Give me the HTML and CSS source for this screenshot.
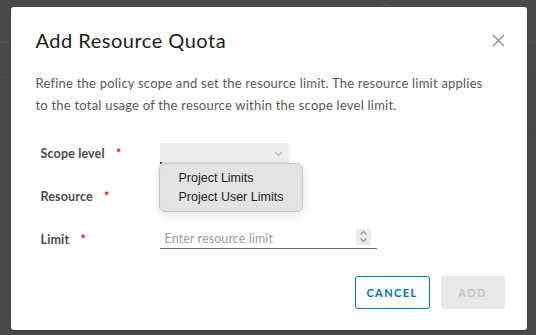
FILE: index.html
```html
<!DOCTYPE html>
<html>
<head>
<meta charset="utf-8">
<link rel="stylesheet" href="styles.css">
</head>
<body>
<div class="page">
  <div class="page-top"><span class="avatar"></span></div>
  <div class="page-band"></div>
  <div class="page-row"></div>
</div>
<div class="overlay">
  <div class="modal">
    <div class="modal-header">
      <h3 class="modal-title">Add Resource Quota</h3>
      <button class="close" aria-label="Close">
        <svg width="13" height="13" viewBox="0 0 13 13"><path d="M1 1L12 12M12 1L1 12" stroke="#8a8a8a" stroke-width="1.3" fill="none"/></svg>
      </button>
    </div>
    <p class="desc">Refine the policy scope and set the resource limit. The resource limit applies to the total usage of the resource within the scope level limit.</p>
    <div class="form">
      <div class="row">
        <label class="label">Scope level <span class="req">*</span></label>
        <div class="control">
          <div class="select">
            <svg class="chev" width="9" height="6" viewBox="0 0 9 6"><path d="M1 1L4.5 4.5L8 1" stroke="#b5b5b5" stroke-width="1.2" fill="none"/></svg>
          </div>
          <div class="menu">
            <div class="menu-item">Project Limits</div>
            <div class="menu-item">Project User Limits</div>
          </div>
        </div>
      </div>
      <div class="row">
        <label class="label">Resource <span class="req">*</span></label>
        <div class="control"></div>
      </div>
      <div class="row">
        <label class="label">Limit <span class="req">*</span></label>
        <div class="control">
          <div class="input">
            <span class="placeholder">Enter resource limit</span>
            <span class="spin">
              <svg width="9" height="13" viewBox="0 0 9 13"><path d="M1.5 4.5L4.5 1.5L7.5 4.5M1.5 8.5L4.5 11.5L7.5 8.5" stroke="#8f8f8f" stroke-width="1.1" fill="none"/></svg>
            </span>
          </div>
        </div>
      </div>
    </div>
    <div class="footer">
      <button class="btn btn-outline">CANCEL</button>
      <button class="btn btn-disabled">ADD</button>
    </div>
  </div>
</div>
</body>
</html>
```

FILE: styles.css
```css
* { box-sizing: border-box; }
html, body { margin: 0; padding: 0; }
body {
  width: 536px;
  height: 335px;
  overflow: hidden;
  background: #4a4a4a;
  font-family: Lato, "Liberation Sans", sans-serif;
  position: relative;
}
.page { height: 335px; }
.page-top {
  height: 43px;
  border-bottom: 1px solid #545454;
  position: relative;
}
.avatar {
  position: absolute;
  left: 380px;
  top: 4px;
  width: 14px;
  height: 14px;
  border: 1.5px solid #5c6266;
  border-radius: 50%;
}
.page-band {
  height: 32px;
  border-bottom: 1px solid #444;
}
.page-row {
  height: 57px;
  border-bottom: 1px solid #464646;
}
.overlay {
  position: absolute;
  inset: 0;
  display: flex;
  align-items: center;
  justify-content: center;
  padding-left: 1px;
  padding-top: 2px;
}
.modal {
  width: 516px;
  height: 323px;
  background: #fff;
  border-radius: 3px;
  padding: 20px 22px 21px 25px;
  display: flex;
  flex-direction: column;
  position: relative;
  box-shadow: 0 1px 3px rgba(0,0,0,0.3);
}
.modal-header {
  display: flex;
  align-items: center;
  justify-content: space-between;
  height: 26px;
}
.modal-title {
  margin: 0;
  font-size: 20px;
  font-weight: 400;
  line-height: 26px;
  color: #1b1b1b;
  letter-spacing: 0.5px;
}
.close {
  border: 0;
  background: none;
  padding: 0;
  width: 13px;
  height: 13px;
  display: flex;
  margin-top: 1px;
}
.desc {
  margin: 19px 0 0 0;
  font-size: 13px;
  line-height: 22px;
  color: #575757;
  width: 456px;
  letter-spacing: 0.22px;
}
.form {
  margin-top: 27px;
  padding-left: 5px;
  display: flex;
  flex-direction: column;
  gap: 23px;
}
.row {
  display: flex;
  align-items: center;
  height: 20px;
}
.label {
  width: 119px;
  font-size: 12.5px;
  font-weight: 700;
  color: #4a4a4a;
  letter-spacing: 0.15px;
}
.req {
  color: #c92100;
  margin-left: 8px;
}
.control {
  position: relative;
  height: 20px;
}
.select {
  width: 129px;
  height: 20px;
  background: #ededed;
  border-bottom: 1px solid #e4e4e4;
  position: relative;
}
.select::after {
  content: "";
  position: absolute;
  left: 0;
  bottom: -2px;
  width: 2px;
  height: 2px;
  background: #0072a3;
}
.chev {
  position: absolute;
  right: 6px;
  top: 8px;
}
.menu {
  position: absolute;
  left: -1px;
  top: 20px;
  width: 144px;
  height: 49px;
  background: #e3e3e3;
  border: 1px solid #c4c4c4;
  border-radius: 6px;
  box-shadow: 0 3px 10px rgba(0,0,0,0.12);
  padding: 5px 0 0 19px;
  z-index: 2;
}
.menu-item {
  font-family: "Liberation Sans", Arial, sans-serif;
  font-size: 12.5px;
  line-height: 19px;
  color: #1d1d1d;
}
.input {
  width: 217px;
  height: 20px;
  border-bottom: 1px solid #5f6d74;
  display: flex;
  align-items: center;
  justify-content: space-between;
  padding: 0 6px 0 5px;
}
.placeholder {
  font-size: 12.5px;
  color: #9b9b9b;
  letter-spacing: 0.1px;
}
.spin {
  width: 15px;
  height: 16px;
  background: #ececec;
  display: flex;
  align-items: center;
  justify-content: center;
  margin-top: -4px;
}
.footer {
  margin-top: auto;
  display: flex;
  justify-content: flex-end;
  gap: 11px;
}
.btn {
  height: 33px;
  border-radius: 3px;
  font-family: Lato, "Liberation Sans", sans-serif;
  font-size: 11px;
  font-weight: 700;
  letter-spacing: 1.4px;
  padding: 0;
}
.btn-outline {
  width: 75px;
  background: #fff;
  border: 1px solid #0072a3;
  color: #0072a3;
}
.btn-disabled {
  width: 64px;
  background: #e8e8e8;
  border: 0;
  color: #c2c2c2;
}
```
